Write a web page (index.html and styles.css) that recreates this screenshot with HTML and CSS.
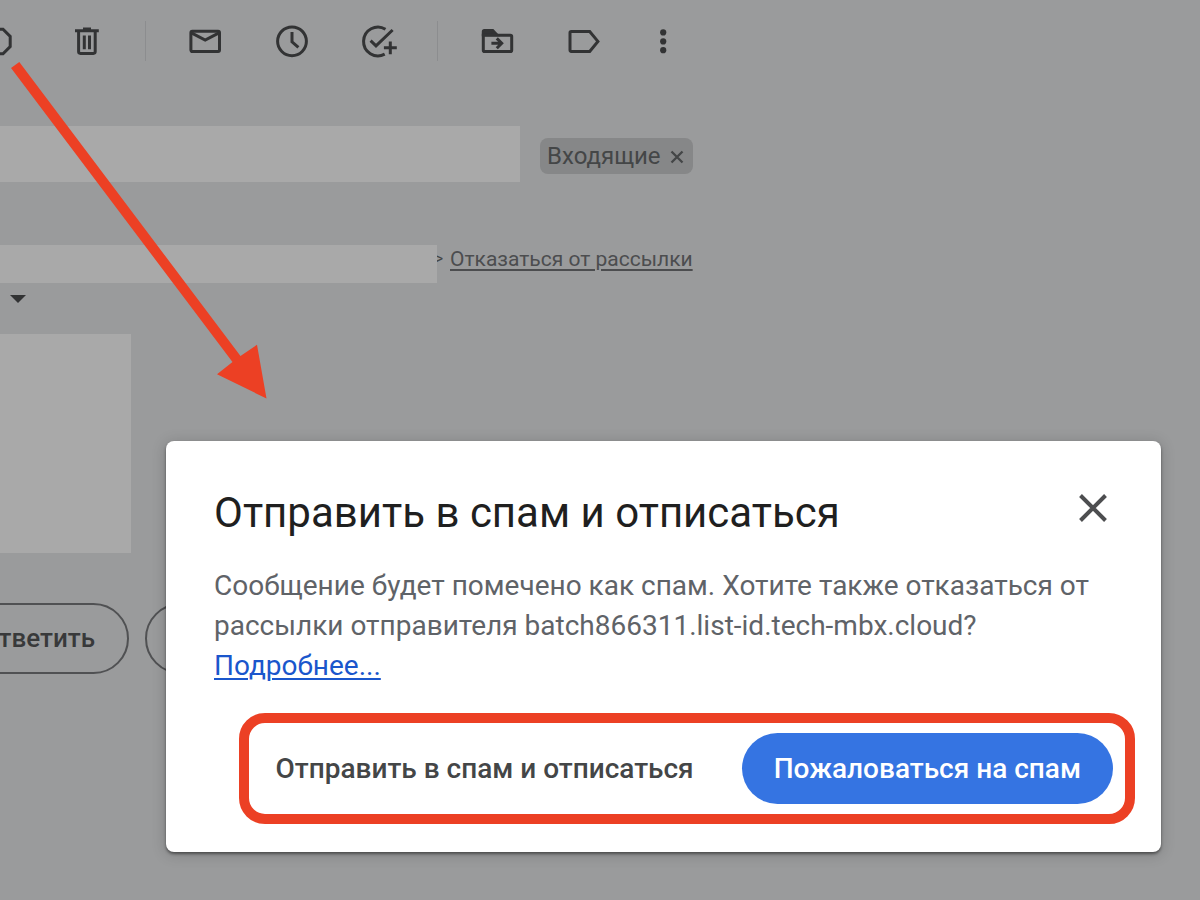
FILE: index.html
```html
<!DOCTYPE html>
<html lang="ru">
<head>
<meta charset="utf-8">
<meta name="viewport" content="width=device-width, initial-scale=1">
<title>Отправить в спам и отписаться</title>
<link rel="stylesheet" href="styles.css">
</head>
<body>
<main class="mail">
  <div class="toolbar" role="toolbar" aria-label="Действия с письмом">
    <div class="group">
      <button class="icon-button" type="button" aria-label="В спам">
        <svg viewBox="0 0 40 40"><path d="M13 8.2h10l7.2 7.2v10.2L23 32.8H13l-7.2-7.2V15.4z"/></svg>
      </button>
      <button class="icon-button" type="button" aria-label="Удалить">
        <svg viewBox="0 0 40 40"><path d="M8 9.8h23.8M16 8.1h8M11.6 10v20.6q0 1.8 1.8 1.8h13q1.8 0 1.8-1.8V10M17.3 14.4v13.8M22.5 14.4v13.8"/></svg>
      </button>
    </div>
    <div class="group">
      <button class="icon-button" type="button" aria-label="Отметить как непрочитанное">
        <svg viewBox="0 0 40 40"><rect x="5.9" y="10.3" width="28.6" height="20.2" rx="1.4"/><path d="M6.4 11.8 20.2 19l13.8-7.2"/></svg>
      </button>
      <button class="icon-button" type="button" aria-label="Отложить">
        <svg viewBox="0 0 40 40"><circle cx="20" cy="20.3" r="14.4"/><path d="M20 11v9.8l6.4 5.6"/></svg>
      </button>
      <button class="icon-button" type="button" aria-label="Добавить в задачи">
        <svg viewBox="0 0 40 40"><path d="M26.5 8.2a14.4 14.4 0 1 0-.8 25M11.6 19.6l5.4 5.2L33.6 9M31.3 20.4v12.8M24.9 26.7h12.9"/></svg>
      </button>
    </div>
    <div class="group">
      <button class="icon-button" type="button" aria-label="Переместить">
        <svg viewBox="0 0 40 40"><path d="M6.3 13.8V10.6q0-1 1-1h8.4l4 4.2z" class="solid"/><path d="M6.3 14.3h27.1q1.3 0 1.3 1.3v13.6q0 1.3-1.3 1.3H7.6q-1.3 0-1.3-1.3zM14.4 22.3h10M19.8 17.4l4.9 4.9-4.9 4.9"/></svg>
      </button>
      <button class="icon-button" type="button" aria-label="Ярлыки">
        <svg viewBox="0 0 40 40"><path d="M7.3 10.5h18.4l8.2 9.9-8.2 10H7.3q-1.3 0-1.3-1.3V11.8q0-1.3 1.3-1.3z"/></svg>
      </button>
      <button class="icon-button" type="button" aria-label="Ещё">
        <svg viewBox="0 0 40 40" class="dots"><circle cx="12.2" cy="11.4" r="3.1"/><circle cx="12.2" cy="20.4" r="3.1"/><circle cx="12.2" cy="29.2" r="3.1"/></svg>
      </button>
    </div>
  </div>

  <div class="subject">
    <div class="subject-mask"></div>
    <span class="chip">Входящие
      <button class="chip-close" type="button" aria-label="Убрать ярлык">
        <svg viewBox="0 0 14 14"><path d="m1.5 1.5 11 11m0-11-11 11"/></svg>
      </button>
    </span>
  </div>

  <div class="sender">
    <div class="sender-mask"></div>
    <span class="bracket">&gt;</span>
    <a class="unsubscribe" href="#">Отказаться от рассылки</a>
  </div>
  <button class="details" type="button" aria-label="Показать детали">
    <svg viewBox="0 0 16 8"><path d="M0 0h16L8 8z"/></svg>
  </button>
  <div class="body-mask"></div>

  <div class="replies">
    <button class="reply" type="button">Ответить</button>
    <button class="reply" type="button" aria-label="Переслать"></button>
  </div>
</main>

<svg class="arrow" viewBox="0 0 280 400" aria-hidden="true"><path d="M11 68 19.3 62 240.5 356 257 344.7 266.5 398.5 217 374.3 232.5 362z"/></svg>

<section class="dialog" role="dialog" aria-labelledby="dialog-title">
  <header class="dialog-head">
    <h1 id="dialog-title">Отправить в спам и отписаться</h1>
    <button class="dialog-close" type="button" aria-label="Закрыть">
      <svg viewBox="0 0 28 28"><path d="m1.5 1.5 25 25m0-25-25 25"/></svg>
    </button>
  </header>
  <p class="message">Сообщение будет помечено как спам. Хотите также отказаться от рассылки отправителя batch866311.list-id.tech-mbx.cloud? <a class="more" href="#">Подробнее...</a></p>
  <div class="actions">
    <button class="action" type="button">Отправить в спам и отписаться</button>
    <button class="action primary" type="button">Пожаловаться на спам</button>
  </div>
</section>
</body>
</html>
```
FILE: styles.css
```css
* {
  box-sizing: border-box;
}

body {
  margin: 0;
  min-height: 100vh;
  position: relative;
  overflow: hidden;
  background: #9a9b9c;
  color: #444647;
  font-family: Roboto, "Liberation Sans", sans-serif;
}

button {
  margin: 0;
  padding: 0;
  border: 0;
  background: none;
  color: inherit;
  font: inherit;
  cursor: pointer;
}

svg {
  display: block;
}

/* Toolbar */
.toolbar {
  display: flex;
  align-items: center;
  height: 82px;
  margin-left: -20px;
}

.group {
  display: flex;
  gap: 47px;
}

.group + .group {
  margin-left: 38px;
  padding-left: 39px;
  border-left: 1px solid #8c8d8f;
}

.icon-button svg {
  width: 40px;
  height: 40px;
  fill: none;
  stroke: #323334;
  stroke-width: 3;
}

.icon-button .solid {
  fill: #323334;
}

.icon-button .dots {
  fill: #323334;
  stroke: none;
}

/* Message header */
.subject {
  display: flex;
  align-items: center;
  gap: 20px;
  height: 60px;
  margin-top: 44px;
}

.subject-mask {
  align-self: flex-start;
  width: 520px;
  height: 56px;
  background: #a9a9a9;
}

.chip {
  display: flex;
  align-items: center;
  gap: 9px;
  height: 36px;
  padding: 0 9px 0 7px;
  border-radius: 8px;
  background: #868788;
  font-size: 24px;
}

.chip-close svg {
  width: 14px;
  height: 14px;
  margin-top: 2px;
  fill: none;
  stroke: #444647;
  stroke-width: 2.3;
}

.sender {
  display: flex;
  align-items: flex-start;
  margin-top: 59px;
  font-size: 21px;
  line-height: 28px;
}

.sender-mask {
  width: 437px;
  height: 38px;
  background: #a9a9a9;
}

.bracket {
  display: flex;
  justify-content: flex-end;
  width: 6px;
  margin-right: 7px;
  overflow: hidden;
  font-size: 16px;
}

.unsubscribe {
  color: #4c4d4f;
  text-decoration-thickness: 2px;
  text-underline-offset: 3px;
}

.details {
  display: block;
  margin: 12px 0 0 10px;
}

.details svg {
  width: 16px;
  height: 8px;
  fill: #323334;
}

.body-mask {
  width: 131px;
  height: 219px;
  margin-top: 31px;
  background: #a9a9a9;
}

.replies {
  display: flex;
  gap: 16px;
  margin: 50px 0 0 -57px;
}

.reply {
  height: 71px;
  width: 186px;
  padding: 0 32px 2px;
  border: 2px solid #505153;
  border-radius: 36px;
  color: #38393a;
  font-size: 26px;
  font-weight: 500;
  text-align: right;
}

/* Pointer from the toolbar to the dialog */
.arrow {
  position: absolute;
  top: 0;
  left: 0;
  width: 280px;
  height: 400px;
  fill: #ec4024;
  pointer-events: none;
}

/* Dialog */
.dialog {
  position: absolute;
  top: 441px;
  left: 166px;
  right: 39px;
  padding: 48px 26px 28px 48px;
  border-radius: 8px;
  background: #fff;
  box-shadow: 0 2px 3px rgba(0, 0, 0, .45), 0 2px 14px 2px rgba(0, 0, 0, .14);
}

.dialog-head {
  display: flex;
  justify-content: space-between;
  align-items: flex-start;
  padding-right: 28px;
}

h1 {
  margin: 0;
  color: #1f1f1f;
  font-size: 42px;
  font-weight: 400;
  line-height: 48px;
}

.dialog-close svg {
  width: 28px;
  height: 28px;
  margin-top: 5px;
  fill: none;
  stroke: #4d4e50;
  stroke-width: 4;
}

.message {
  margin: 29px 0 27px;
  padding-right: 24px;
  color: #5f6368;
  font-size: 28px;
  line-height: 40px;
}

.more {
  color: #1a56cc;
  text-decoration-thickness: 2px;
  text-underline-offset: 3px;
}

.actions {
  display: flex;
  justify-content: flex-end;
  align-items: center;
  margin-left: 25px;
  padding: 10px 12px 10px 0;
  border: 10px solid #ec4024;
  border-radius: 26px;
}

.action {
  height: 71px;
  padding: 0 24px;
  border-radius: 36px;
  color: #444647;
  font-size: 28px;
  font-weight: 500;
  white-space: nowrap;
}

.action + .action {
  margin-left: 24px;
}

.action.primary {
  padding: 0 32px;
  background: #3574e2;
  color: #fff;
}
```
